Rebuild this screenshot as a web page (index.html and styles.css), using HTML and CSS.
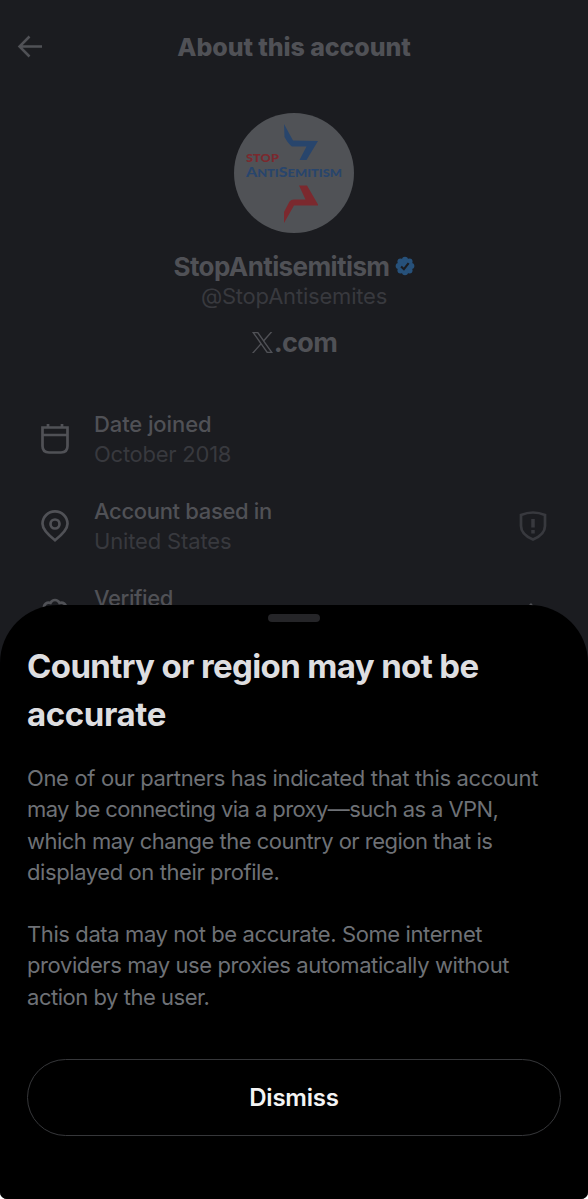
FILE: index.html
```html
<!DOCTYPE html>
<html lang="en">
<head>
<meta charset="utf-8">
<title>About this account</title>
<link rel="stylesheet" href="styles.css">
</head>
<body>
<main class="screen">
  <header class="topbar">
    <svg class="back" viewBox="0 0 26 24" width="26" height="24"><path d="M25 11.500H2.500M12.500 1.500L2.500 11.500L12.500 21.500"/></svg>
    <h1 class="topbar-title"><span>About this account</span></h1>
  </header>
  <section class="profile">
    <div class="avatar">
      <svg viewBox="0 0 120 120" width="120" height="120">
        <path class="blue" d="M50 11L59 27.500L84 28L72.500 47H65.500L72.500 33.500H58Q55 32 50.500 24Z"/>
        <path class="red" d="M65 72.500H73L84 91.500V92.500H60L50 110V99L55.500 88.500Q57 86.500 60 86.500H71.500Z"/>
        <text class="red" x="12" y="48.500" font-size="12" textLength="33" lengthAdjust="spacingAndGlyphs">STOP</text>
        <text class="blue" x="12" y="64" font-size="13" textLength="96" lengthAdjust="spacingAndGlyphs">A<tspan font-size="10.500">NTI</tspan>S<tspan font-size="10.500">EMITISM</tspan></text>
      </svg>
    </div>
    <div class="name"><span>StopAntisemitism</span>
      <svg viewBox="0 0 22 22" width="20" height="20"><g class="badge"><circle cx="11" cy="11" r="8.500"/><circle cx="11" cy="4" r="3.300"/><circle cx="16" cy="6" r="3.300"/><circle cx="18" cy="11" r="3.300"/><circle cx="16" cy="16" r="3.300"/><circle cx="11" cy="18" r="3.300"/><circle cx="6" cy="16" r="3.300"/><circle cx="4" cy="11" r="3.300"/><circle cx="6" cy="6" r="3.300"/></g><path class="tick" d="M6.700 11.500L9.800 14.500L15 7.800"/></svg>
    </div>
    <div class="handle"><span>@StopAntisemites</span></div>
    <div class="brand">
      <svg viewBox="0 0 24 24" width="23" height="23"><path d="M14.095 10.316L22.286 1h-1.940l-7.115 8.087L7.551 1H1l8.590 12.231L1 23h1.940l7.510-8.543L16.450 23H23l-8.905-12.684Zm-2.658 3.022l-.872-1.218L3.640 2.432h2.980l5.590 7.821.869 1.219 7.265 10.166h-2.982l-5.925-8.300Z"/></svg>
      <span>.com</span>
    </div>
  </section>
  <section class="facts">
    <div class="fact">
      <svg class="icon" viewBox="0 0 30 34" width="30" height="34"><path d="M2.500 5.500H27.500V24Q27.500 30.500 21 30.500H9Q2.500 30.500 2.500 24ZM2.500 13H27.500M8 2V6M22 2V6"/></svg>
      <div class="fact-text"><b class="t1">Date joined</b><span class="s1">October 2018</span></div>
    </div>
    <div class="fact">
      <svg class="icon" viewBox="0 0 30 34" width="30" height="34"><path d="M15 31.300C7 25 2.500 20 2.500 14.800a12.500 12.500 0 0 1 25 0C27.500 20 23 25 15 31.300Z"/><circle cx="15" cy="15" r="4.500"/></svg>
      <div class="fact-text"><b class="t2">Account based in</b><span class="s2">United States</span></div>
      <svg class="shield" viewBox="0 0 28 32" width="28" height="32"><path d="M14 2.500Q20 2.500 26 5V16C26 22.500 20 27 14 29.500C8 27 2 22.500 2 16V5Q8 2.500 14 2.500Z"/><path class="mark" d="M14 9V17.500M14 20V23.500"/></svg>
    </div>
    <div class="fact">
      <svg class="icon" viewBox="0 0 30 34" width="30" height="34"><path d="M4 12.500C3.500 8 7 6 10.500 7C12.500 3 17.500 3 19.500 7C23 6 26.500 8 26 12.500C29 15 29 19 26 21.500C26.500 26 23 28 19.500 27C17.500 31 12.500 31 10.500 27C7 28 3.500 26 4 21.500C1 19 1 15 4 12.500Z"/></svg>
      <div class="fact-text"><b class="t3">Verified</b></div>
      <svg class="chevron" viewBox="0 0 12 20" width="12" height="20"><path d="M2 1L10 10L2 19"/></svg>
    </div>
  </section>
  <section class="sheet">
    <div class="grabber"></div>
    <h2><span class="h1">Country or region may not be</span><span class="h2">accurate</span></h2>
    <p><span class="p1">One of our partners has indicated that this account</span><span class="p2">may be connecting via a proxy—such as a VPN,</span><span class="p3">which may change the country or region that is</span><span class="p4">displayed on their profile.</span></p>
    <p><span class="p5">This data may not be accurate. Some internet</span><span class="p6">providers may use proxies automatically without</span><span class="p7">action by the user.</span></p>
    <button class="dismiss">Dismiss</button>
  </section>
</main>
</body>
</html>
```
FILE: styles.css
```css
* { box-sizing: border-box; }
body { margin: 0; background: #fff; font-family: Inter, "Liberation Sans", sans-serif; }
.screen { position: relative; width: 588px; height: 1199px; overflow: hidden; border-radius: 0 0 7px 7px; background: #1b1c20; color: #505156; }
svg { display: block; flex: none; fill: none; }
.topbar { display: grid; grid-template-columns: 26px 1fr 26px; align-items: center; height: 94px; padding: 0 17px; }
.back { stroke: #505156; stroke-width: 2.500; }
.topbar-title { margin: 0; text-align: center; font-size: 25px; line-height: 30px; font-weight: 800; letter-spacing: -.1px; }
.profile { display: flex; flex-direction: column; align-items: center; padding-top: 19px; }
.avatar { width: 120px; height: 120px; border-radius: 50%; background: #505256; font-family: Lato, sans-serif; font-weight: 900; }
.blue { fill: #28456c; }
.red { fill: #7b292e; }
.name { display: flex; align-items: center; gap: 5px; margin-top: 17px; height: 32px; font-size: 26px; font-weight: 700; letter-spacing: -.6px; }
.badge { fill: #27517a; }
.tick { stroke: #1b1c20; stroke-width: 2.400; }
.handle { height: 30px; margin-top: -1px; line-height: 30px; font-size: 22px; letter-spacing: -.2px; color: #38393e; }
.brand { display: flex; align-items: center; height: 32px; margin-top: 15px; font-size: 27px; font-weight: 700; letter-spacing: -.6px; }
.brand svg { fill: #505156; }
.facts { display: flex; flex-direction: column; gap: 27px; padding: 51px 40px 0; }
.fact { display: flex; align-items: center; height: 60px; gap: 24px; }
.icon { stroke: #505156; stroke-width: 2.700; }
.fact-text { display: flex; flex: 1; flex-direction: column; height: 60px; font-size: 22px; line-height: 30px; white-space: nowrap; }
.fact-text b { font-weight: 500; }
.fact-text span { color: #38393e; }
.fact-text .t1 { letter-spacing: -.1px; }
.fact-text .t2 { letter-spacing: -.33px; }
.fact-text .t3 { letter-spacing: -.4px; }
.fact-text .s1 { letter-spacing: -.25px; }
.fact-text .s2 { letter-spacing: -.15px; }
.shield { stroke: #38393e; stroke-width: 2.700; margin-right: 1px; }
.chevron { stroke: #505156; stroke-width: 2.700; margin-right: 8px; }
.mark { stroke-width: 3.500; }
.sheet { position: absolute; left: 0; right: 0; top: 605px; bottom: 0; padding: 9px 27px 0; border-radius: 58px 58px 0 0; background: #000; }
.grabber { width: 52px; height: 8px; margin: 0 auto 20px; border-radius: 4px; background: #252528; }
.sheet h2 { margin: 0 0 25px; color: #dedee0; font-size: 33px; line-height: 48px; font-weight: 700; }
.sheet h2 span, .sheet p span { display: block; width: max-content; }
.sheet .h1 { letter-spacing: -.63px; }
.sheet .h2 { letter-spacing: -.4px; }
.sheet p { margin: 0 0 31px; color: #6e7176; font-size: 22px; line-height: 31.300px; }
.sheet .p1 { letter-spacing: -.35px; }
.sheet .p2 { letter-spacing: -.59px; }
.sheet .p3 { letter-spacing: -.52px; }
.sheet .p4 { letter-spacing: -.41px; }
.sheet .p5, .sheet .p6 { letter-spacing: -.4px; }
.sheet .p7 { letter-spacing: -.47px; }
.dismiss { display: block; width: 534px; height: 77px; margin-top: 46px; padding: 0; border: 1.500px solid #36373a; border-radius: 39px; background: #000; color: #f4f4f4; font: 600 24px Inter, sans-serif; letter-spacing: -.2px; }
```
